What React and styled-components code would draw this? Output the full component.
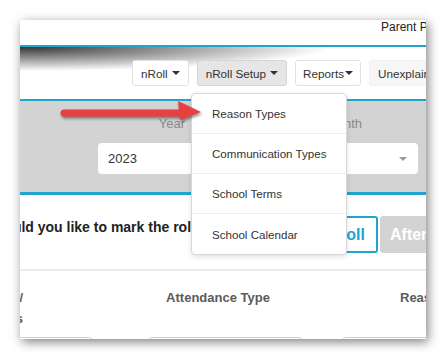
import React from "react";
import styled, { createGlobalStyle } from "styled-components";

const BLUE = "#20a4cc";

const Global = createGlobalStyle`
  *, *::before, *::after {
    box-sizing: border-box;
  }
  body {
    margin: 0;
    background: #fff;
    font-family: "Liberation Sans", Arial, sans-serif;
  }
`;

// the cropped window, with its drop shadow
const Frame = styled.div`
  position: relative;
  margin: 20px;
  width: 406px;
  height: 319px;
  overflow: hidden;
  background: #fff;
  box-shadow: 2px 3px 10px rgba(0, 0, 0, 0.5);
`;

const TopBar = styled.div`
  height: 27px;
  border-bottom: 2px solid ${BLUE};
  padding-left: 361px;
  font-size: 12px;
  line-height: 14px;
  color: #222;
  white-space: nowrap;
`;

const Nav = styled.div`
  height: 54px;
  border-bottom: 2px solid ${BLUE};
  display: flex;
  align-items: flex-start;
  gap: 8px;
  padding: 13px 0 0 112px;
  white-space: nowrap;
  background: radial-gradient(ellipse 310px 24px at 0 0, rgba(30, 30, 30, 0.9), rgba(255, 255, 255, 0) 100%), #fff;
`;

const tones = {
  plain: { bg: "#fff", border: "#e2e2e2" },
  active: { bg: "#e6e6e6", border: "#d4d4d4" },
  soft: { bg: "#f6f6f6", border: "#f0f0f0" },
};

const NavButton = styled.div`
  flex-shrink: 0;
  height: 26px;
  padding: 0 ${(p) => p.$pad ?? 8}px;
  display: inline-flex;
  align-items: center;
  gap: ${(p) => p.$gap ?? 4}px;
  background: ${(p) => tones[p.$tone || "plain"].bg};
  border: 1px solid ${(p) => tones[p.$tone || "plain"].border};
  border-radius: 3px;
  font-size: 11.7px;
  color: #333;
`;

const Caret = styled.span`
  width: 0;
  height: 0;
  border-left: 4px solid transparent;
  border-right: 4px solid transparent;
  border-top: 4px solid ${(p) => p.$color || "#333"};
`;

const Filters = styled.div`
  height: 94px;
  background: #d3d3d3;
  border-bottom: 3px solid ${BLUE};
  display: flex;
  gap: 24px;
  padding: 14px 0 0 78px;
`;

const Field = styled.div`
  width: 148px;
  display: flex;
  flex-direction: column;
`;

const FieldLabel = styled.div`
  text-align: center;
  font-size: 13px;
  line-height: 18px;
  color: #888;
  margin-bottom: 10px;
`;

const Select = styled.div`
  height: 31px;
  background: #fff;
  border-radius: 4px;
  display: flex;
  align-items: center;
  justify-content: space-between;
  padding: 0 11px 0 10px;
  font-size: 13px;
  color: #333;
`;

const Lower = styled.div`
  padding-top: 21px;
`;

const RollRow = styled.div`
  display: flex;
  align-items: flex-start;
  margin-left: -60px;
  width: 520px;
`;

const Prompt = styled.div`
  flex: 1;
  padding-top: 2px;
  font-size: 14px;
  font-weight: bold;
  line-height: 18px;
  color: #222;
  white-space: nowrap;
`;

const ChoiceButton = styled.div`
  height: 37px;
  display: flex;
  align-items: center;
  padding: 0 ${(p) => (p.$selected ? 11 : 8)}px 0 ${(p) => (p.$selected ? 18 : 8)}px;
  margin-left: 2px;
  border-radius: 3px;
  font-size: 16px;
  font-weight: bold;
  border: 2px solid ${(p) => (p.$selected ? BLUE : "#d3d3d3")};
  background: ${(p) => (p.$selected ? "#fff" : "#d3d3d3")};
  color: ${(p) => (p.$selected ? BLUE : "#fff")};
  width: ${(p) => (p.$selected ? "auto" : "100px")};
`;

const Divider = styled.div`
  height: 2px;
  background: #ececec;
  margin-top: 16px;
`;

const HeadRow = styled.div`
  display: flex;
  margin-top: 16px;
`;

const HeadCell = styled.div`
  flex-shrink: 0;
  width: ${(p) => p.$w}px;
  margin-left: ${(p) => p.$ml}px;
  text-align: ${(p) => p.$align};
  font-size: 13px;
  font-weight: bold;
  line-height: 21px;
  color: #5b5b5b;
  white-space: nowrap;
`;

const InputRow = styled.div`
  display: flex;
  margin-top: 8px;
`;

const InputBox = styled.div`
  flex-shrink: 0;
  width: ${(p) => p.$w}px;
  margin-left: ${(p) => p.$ml}px;
  height: 34px;
  border: 1px solid #cfcfcf;
  border-radius: 4px;
`;

const Menu = styled.div`
  position: absolute;
  left: 171px;
  top: 73px;
  width: 156px;
  background: #fff;
  border: 1px solid #d8d8d8;
  border-radius: 4px;
  box-shadow: 0 2px 5px rgba(0, 0, 0, 0.12);
`;

const MenuItem = styled.div`
  height: 40px;
  display: flex;
  align-items: center;
  padding-left: 20px;
  font-size: 11.6px;
  color: #333;
  border-bottom: 1px solid #ececec;
  &:last-child {
    border-bottom: none;
  }
`;

const Arrow = styled.svg`
  position: absolute;
  left: 40px;
  top: 78px;
  filter: drop-shadow(1px 2px 1.5px rgba(0, 0, 0, 0.45));
`;

export default function App() {
  return (
    <>
      <Global />
      <Frame>
        <TopBar>Parent Portal</TopBar>
        <Nav>
          <NavButton>nRoll <Caret /></NavButton>
          <NavButton $tone="active">nRoll Setup <Caret /></NavButton>
          <NavButton $gap={1} $pad={7}>Reports<Caret /></NavButton>
          <NavButton $tone="soft">Unexplained Absences</NavButton>
        </Nav>
        <Filters>
          <Field>
            <FieldLabel>Year</FieldLabel>
            <Select>2023</Select>
          </Field>
          <Field>
            <FieldLabel>Month</FieldLabel>
            <Select>
              <span />
              <Caret $color="#999" />
            </Select>
          </Field>
        </Filters>
        <Lower>
          <RollRow>
            <Prompt>How would you like to mark the roll?</Prompt>
            <ChoiceButton $selected>Roll</ChoiceButton>
            <ChoiceButton>Afternoon</ChoiceButton>
          </RollRow>
          <Divider />
          <HeadRow>
            <HeadCell $w={120} $ml={-117} $align="right">
              Student /<br />Class
            </HeadCell>
            <HeadCell $w={140} $ml={125} $align="center">Attendance Type</HeadCell>
            <HeadCell $w={120} $ml={112} $align="left">Reason Type</HeadCell>
          </HeadRow>
          <InputRow>
            <InputBox $w={173} $ml={-100} />
            <InputBox $w={155} $ml={55} />
            <InputBox $w={160} $ml={39} />
          </InputRow>
        </Lower>
        <Menu>
          <MenuItem>Reason Types</MenuItem>
          <MenuItem>Communication Types</MenuItem>
          <MenuItem>School Terms</MenuItem>
          <MenuItem>School Calendar</MenuItem>
        </Menu>
        <Arrow width="150" height="40" viewBox="0 0 150 40">
          <line x1="4" y1="15" x2="122" y2="15" stroke="#e8403f" strokeWidth="7" strokeLinecap="round" />
          <polygon points="118,3 141,14 120,22" fill="#e8403f" />
        </Arrow>
      </Frame>
    </>
  );
}
